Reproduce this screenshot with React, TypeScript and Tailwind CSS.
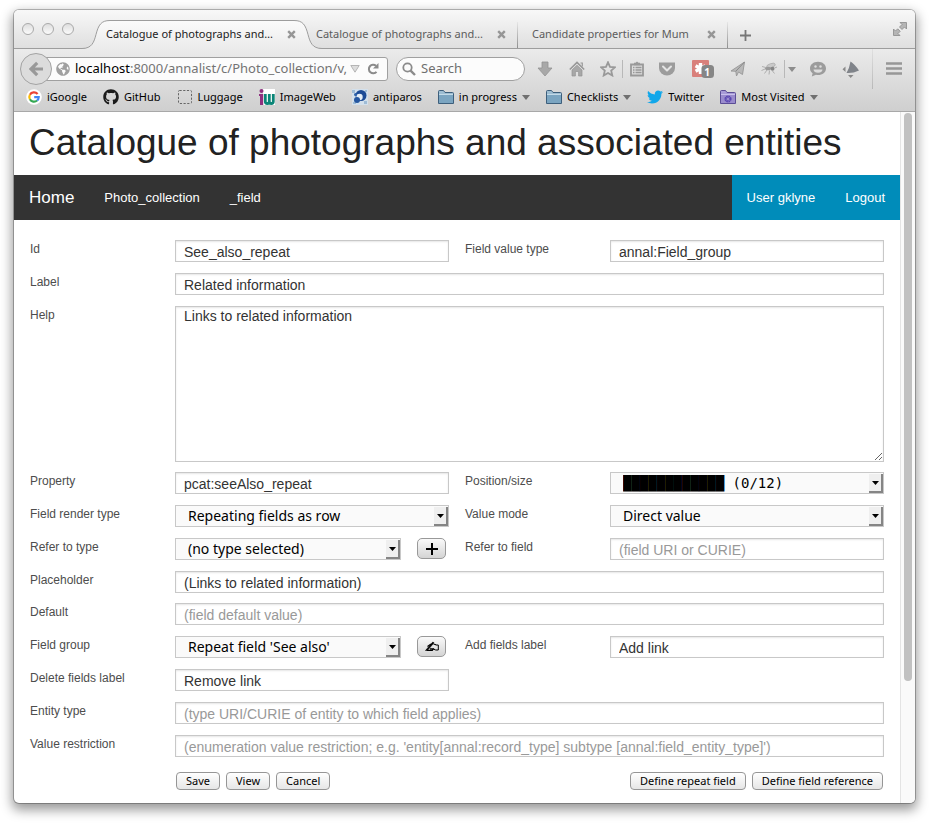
import type { ReactNode } from "react";
import { FaGithub, FaTwitter, FaGlobeAmericas } from "react-icons/fa";

const UI = "font-['Noto_Sans','Open_Sans',sans-serif]";

function Caret({ fill = "#707070" }: { fill?: string }) {
  return (
    <svg width="8" height="5" viewBox="0 0 8 5" aria-hidden="true">
      <path d="M0 0h8L4 5z" fill={fill} />
    </svg>
  );
}

function CloseMark() {
  return (
    <svg width="9" height="9" viewBox="0 0 9 9" aria-hidden="true">
      <path d="M1.2 1.2l6.6 6.6M7.8 1.2L1.2 7.8" stroke="#969696" strokeWidth="2.4" />
    </svg>
  );
}

function FolderIcon({ gear = false }: { gear?: boolean }) {
  const edge = gear ? "#5b4d96" : "#3d5f7c";
  return (
    <svg width="16" height="16" viewBox="0 0 16 16" aria-hidden="true">
      <path d="M.5 14.5v-12q0-1 1-1h4l1.500 2h7.500q1 0 1 1v10z" fill={gear ? "#a79bd6" : "#9dbdd2"} stroke={edge} />
      <path d="M1 6h14v8H1z" fill={gear ? "#9a8ccd" : "#7ba5c1"} />
      <path d="M1 5.500h14" stroke={gear ? "#c9c1ec" : "#c3dae8"} />
      {gear && (
        <circle cx="8" cy="10" r="2.500" fill="none" stroke="#5945b0" strokeWidth="2.200" strokeDasharray="1.500 .46" />
      )}
    </svg>
  );
}

function GoogleIcon() {
  return (
    <svg width="16" height="16" viewBox="0 0 16 16" aria-hidden="true">
      <circle cx="8" cy="8" r="7.800" fill="#fff" />
      <g fill="none" strokeWidth="2.200">
        <path d="M11.600 5A4.700 4.700 0 0 0 3.900 5.700" stroke="#ea4335" />
        <path d="M3.900 5.700a4.700 4.700 0 0 0 0 4.600" stroke="#fbbc05" />
        <path d="M3.900 10.300a4.700 4.700 0 0 0 7.200 1.200" stroke="#34a853" />
        <path d="M11.100 11.500A4.500 4.500 0 0 0 12.700 8.200H8.200" stroke="#4285f4" />
      </g>
    </svg>
  );
}

function ImageWebIcon() {
  return (
    <svg width="16" height="16" viewBox="0 0 16 16" aria-hidden="true">
      <path d="M4 0h12v16H4z" fill="#fff" />
      <circle cx="2.500" cy="2" r="2" fill="#8f2f7f" />
      <path d="M0 5h4.200v11H1V7H0z" fill="#8f2f7f" />
      <path d="M6.300 5v7.500q0 2 2 2t2-2V5v7.500q0 2 2 2t2-2V5" fill="none" stroke="#0b8577" strokeWidth="2.800" />
    </svg>
  );
}

function AntiparosIcon() {
  return (
    <svg width="16" height="16" viewBox="0 0 16 16" aria-hidden="true">
      <path d="M0 0h16v16H0z" fill="#d3e0ec" />
      <path d="M0 1h3v3H0zM12 12h3v3h-3zM1 13h3v2H1zM13 1h2v2h-2z" fill="#9fbcd6" />
      <circle cx="9" cy="6.500" r="5.500" fill="#1c4b96" />
      <circle cx="7.500" cy="8" r="3.200" fill="#e3edf6" />
      <circle cx="5" cy="11" r="3" fill="#2456a0" />
      <circle cx="3.500" cy="5.500" r="1.500" fill="#2f62aa" />
    </svg>
  );
}

function Bookmark({ icon, label, menu = false }: { icon: ReactNode; label: string; menu?: boolean }) {
  return (
    <a href="#" className="flex shrink-0 items-center gap-[5px] whitespace-nowrap">
      <span className="flex w-4 justify-center">{icon}</span>
      {label}
      {menu && <Caret />}
    </a>
  );
}

function ToolButton({ label, className, children }: { label: string; className: string; children: ReactNode }) {
  return (
    <button type="button" aria-label={label} className={`flex h-6 shrink-0 items-center justify-center ${className}`}>
      {children}
    </button>
  );
}

function ToolIcons() {
  return (
    <>
      <ToolButton label="Downloads" className="ml-1 w-8">
        <svg width="16" height="16" viewBox="0 0 16 16">
          <path d="M5 1h6v6h4l-7 8-7-8h4z" fill="#a8a8a8" stroke="#939393" strokeWidth=".8" />
        </svg>
      </ToolButton>
      <ToolButton label="Home page" className="w-8">
        <svg width="16" height="16" viewBox="0 0 16 16">
          <path d="M.8 8.500L8 1.500l7.200 7" fill="none" stroke="#989898" strokeWidth="1.700" />
          <path d="M3 9l5-4.800L13 9v6H9.600v-4.500H6.400V15H3z" fill="#a8a8a8" stroke="#939393" strokeWidth=".7" />
          <path d="M11.500 2h1.800v3.500" fill="none" stroke="#999" strokeWidth="1.200" />
        </svg>
      </ToolButton>
      <ToolButton label="Bookmark this page" className="w-[29px]">
        <svg width="16" height="16" viewBox="0 0 16 16">
          <path d="M8 1.300l2 4.500 4.900.5-3.700 3.300 1.100 4.900L8 12l-4.300 2.500 1.100-4.900L1.100 6.300 6 5.800z" fill="none" stroke="#999" strokeWidth="1.800" />
        </svg>
      </ToolButton>
      <span className="h-[18px] w-px shrink-0 bg-[#b8b8b8]" />
      <ToolButton label="Bookmarks menu" className="w-7">
        <svg width="16" height="16" viewBox="0 0 16 16">
          <path d="M2 3.500h12v11H2z" fill="#ddd" stroke="#999" strokeWidth="1.800" />
          <path d="M5 1.800h1.500L8 .5l1.500 1.300H11v2.500H5z" fill="#999" />
          <path d="M4 6.500h1.500M6.500 6.500h6M4 9h1.500M6.500 9h6M4 11.500h1.500M6.500 11.500h6" stroke="#999" strokeWidth="1.300" />
        </svg>
      </ToolButton>
      <ToolButton label="Save to Pocket" className="w-8">
        <svg width="16" height="16" viewBox="0 0 16 16">
          <path d="M0 1.500h16V7a8 7.500 0 0 1-16 0z" fill="#9c9c9c" />
          <path d="M4 5.500l4 4 4-4" fill="none" stroke="#e4e4e4" strokeWidth="2" strokeLinecap="round" strokeLinejoin="round" />
        </svg>
      </ToolButton>
      <ToolButton label="Blocked content, 1 item" className="relative w-[39px]">
        <svg width="22" height="18" viewBox="0 0 22 18">
          <rect width="17" height="17" rx="1" fill="#d9807b" />
          <path d="M8.500 3v11M3.600 5.700l9.800 5.600M3.600 11.300l9.800-5.600" stroke="#fff" strokeWidth="3.400" />
          <rect x="9.500" y="5" width="12.500" height="13" rx="3.500" fill="#868686" />
        </svg>
        <span className="absolute right-[12px] bottom-[3px] text-[10px] leading-3 font-bold text-white">1</span>
      </ToolButton>
      <ToolButton label="Send" className="w-8">
        <svg width="16" height="16" viewBox="0 0 16 16">
          <path d="M1 10L14.500 1l-2 12.500-4-2.500-2 4-.7-4.700z" fill="#b8b8b8" stroke="#959595" strokeWidth=".9" />
          <path d="M14.500 1L5.800 10.300" stroke="#8a8a8a" />
        </svg>
      </ToolButton>
      <ToolButton label="Firebug" className="w-[30px]">
        <svg width="16" height="14" viewBox="0 0 16 14">
          <ellipse cx="10" cy="3.600" rx="4.500" ry="2" fill="#c9c9c9" stroke="#a5a5a5" strokeWidth=".6" transform="rotate(-18 10 3.600)" />
          <ellipse cx="7" cy="6.500" rx="3" ry="1.800" fill="#9a9a9a" />
          <circle cx="11.500" cy="6.800" r="2" fill="#858585" />
          <path d="M6 8l-2.500 3.500M8.500 8.500L8 12.500M11.500 9l2 2.500M4.800 5.500L1 4.500M4 7L.5 8.500M13.500 6L16 5" stroke="#a8a8a8" strokeWidth=".9" />
        </svg>
      </ToolButton>
      <span className="h-[18px] w-px shrink-0 bg-[#b8b8b8]" />
      <ToolButton label="Firebug options" className="w-[14px]">
        <Caret fill="#8c8c8c" />
      </ToolButton>
      <ToolButton label="Chat" className="ml-[3px] w-8">
        <svg width="16" height="16" viewBox="0 0 16 16">
          <path d="M8 .8c4.500 0 8 2.800 8 6.600S12.500 14 8 14q-1 0-2-.2L1.800 15.500l.8-3.300C1 11 0 9.300 0 7.400 0 3.600 3.500.8 8 .8z" fill="#9c9c9c" />
          <circle cx="5.500" cy="5.500" r="1.200" fill="#ddd" />
          <circle cx="10.500" cy="5.500" r="1.200" fill="#ddd" />
          <path d="M3.500 8.500h9Q12 11.800 8 11.800T3.500 8.500z" fill="#ddd" />
        </svg>
      </ToolButton>
      <ToolButton label="Page tools" className="w-8">
        <svg width="17" height="17" viewBox="0 0 17 17">
          <path d="M8.500.5Q12.500 3 17 9.500 11 12.500 4.500 12 7.500 7 8.500.5z" fill="#80848a" />
          <path d="M3.500 5.500v5.500L.5 8.300zM6 14h5.500l-2.800 3z" fill="#8a8a8a" />
        </svg>
      </ToolButton>
      <span className="ml-[6px] w-px shrink-0 self-stretch bg-gradient-to-b from-[#e0e0e0] to-[#b8b8b8]" />
      <ToolButton label="Open menu" className="w-[42px]">
        <svg width="16" height="14" viewBox="0 0 16 14">
          <path d="M0 1.500h16M0 6.500h16M0 11.500h16" stroke="#979797" strokeWidth="2.600" />
        </svg>
      </ToolButton>
    </>
  );
}

function BrowserChrome() {
  return (
    <header className={`${UI} rounded-t-[5px] text-[11px] text-black`}>
      <div className="flex h-[39px] items-end rounded-t-[5px] border-b border-[#9d9d9d] bg-gradient-to-b from-[#f8f8f8] to-[#dfdfdf]">
        <div className="flex w-[68px] shrink-0 gap-2 self-start pt-[13px] pl-2">
          <button type="button" aria-label="Close window" className="size-3 rounded-full border border-[#a9a9a9] bg-gradient-to-b from-[#dedede] to-[#fbfbfb]" />
          <button type="button" aria-label="Minimise window" className="size-3 rounded-full border border-[#a9a9a9] bg-gradient-to-b from-[#dedede] to-[#fbfbfb]" />
          <button type="button" aria-label="Zoom window" className="size-3 rounded-full border border-[#a9a9a9] bg-gradient-to-b from-[#dedede] to-[#fbfbfb]" />
        </div>
        <div className="relative flex h-[28px] w-[220px] shrink-0 items-center pt-px pl-6">
          <svg className="absolute top-0 left-0 z-0" width="244" height="29" viewBox="0 0 244 29" aria-hidden="true">
            <defs>
              <linearGradient id="tabFill" x1="0" y1="0" x2="0" y2="1">
                <stop offset="0" stopColor="#fbfbfb" />
                <stop offset="1" stopColor="#ebebeb" />
              </linearGradient>
            </defs>
            <path
              d="M0 29v-.5c10 0 12-6.500 14-14C16.500 5 19 .5 28 .5h184c9 0 11.500 4.500 14 14 2 7.500 4 14 14 14v.5z"
              fill="url(#tabFill)"
            />
            <path d="M0 28.500c10 0 12-6.500 14-14C16.500 5 19 .5 28 .5h184c9 0 11.500 4.500 14 14 2 7.500 4 14 14 14" fill="none" stroke="#9d9d9d" />
          </svg>
          <span className="relative w-[181px] text-[#222]">Catalogue of photographs and…</span>
          <button type="button" aria-label="Close tab" className="relative">
            <CloseMark />
          </button>
        </div>
        <div className="relative flex h-[28px] w-[216px] shrink-0 items-center pt-px pl-[14px] text-[#5c5c5c]">
          <span className="w-[181px]">Catalogue of photographs and…</span>
          <button type="button" aria-label="Close tab">
            <CloseMark />
          </button>
          <span className="absolute right-0 bottom-0 h-[26px] w-px bg-gradient-to-b from-[#e6e6e6] to-[#8f8f8f]" />
        </div>
        <div className="relative flex h-[28px] w-[210px] shrink-0 items-center pt-px pl-[14px] text-[#5c5c5c]">
          <span className="w-[175px]">Candidate properties for Mum</span>
          <button type="button" aria-label="Close tab">
            <CloseMark />
          </button>
          <span className="absolute right-0 bottom-0 h-[26px] w-px bg-gradient-to-b from-[#e6e6e6] to-[#8f8f8f]" />
        </div>
        <button type="button" aria-label="New tab" className="flex h-[28px] w-[34px] items-center justify-center pt-[3px]">
          <svg width="11" height="11" viewBox="0 0 11 11">
            <path d="M5.500 0v11M0 5.500h11" stroke="#777" strokeWidth="1.800" />
          </svg>
        </button>
        <button type="button" aria-label="Full screen" className="mt-3 mr-2 ml-auto self-start">
          <svg width="14" height="14" viewBox="0 0 14 14">
            <path d="M7 .5h6.500V7l-2-2-2.500 2.500L6.500 5 9 2.500z" fill="#b5b5b5" stroke="#8a8a8a" strokeWidth=".8" />
            <path d="M.5 7v6.500H7l-2-2 2.200-2.200L4.700 6.800 2.500 9z" fill="#b5b5b5" stroke="#8a8a8a" strokeWidth=".8" />
          </svg>
        </button>
      </div>
      <div className="border-b border-[#a8a8a8] bg-gradient-to-b from-[#ebebeb] to-[#cfcfcf]">
        <div className="flex h-10 items-center">
          <button
            type="button"
            aria-label="Back"
            className="relative z-10 ml-[6px] flex size-8 shrink-0 items-center justify-center rounded-full border border-[#a3a3a3] bg-[#dcdcdc]"
          >
            <svg width="15" height="16" viewBox="0 0 15 16">
              <path d="M14 8H2.500M8.200 1.800L2 8l6.200 6.200" fill="none" stroke="#999" strokeWidth="3.200" />
            </svg>
          </button>
          <div className="-ml-3 flex h-6 min-w-0 flex-1 items-center rounded-r-[3px] border border-[#a0a0a0] bg-[#fcfcfc] pl-[15px]">
            <FaGlobeAmericas className="shrink-0 text-[#a0a0a0]" size={14} />
            <div className="ml-[5px] min-w-0 flex-1 overflow-hidden text-[13px] whitespace-nowrap text-[#737373]">
              <span className="text-black">localhost</span>:8000/annalist/c/Photo_collection/v,
            </div>
            <button type="button" aria-label="Show history">
              <svg width="10" height="8" viewBox="0 0 10 8">
                <path d="M.8.500h8.400L5 7.200z" fill="#ddd" stroke="#b5b5b5" />
              </svg>
            </button>
            <button type="button" aria-label="Reload" className="mr-2 ml-[7px]">
              <svg width="12" height="12" viewBox="0 0 12 12">
                <path d="M9.500 8.800A4.300 4.300 0 1 1 9 2.800" fill="none" stroke="#8b8b8b" strokeWidth="2" />
                <path d="M11.500 0v5.500H6z" fill="#8b8b8b" />
              </svg>
            </button>
          </div>
          <label className="ml-2 flex h-6 w-[129px] shrink-0 items-center rounded-full border border-[#a0a0a0] bg-[#fcfcfc] pl-[5px]">
            <svg width="14" height="14" viewBox="0 0 14 14" className="shrink-0" aria-hidden="true">
              <circle cx="5.500" cy="5.500" r="4.200" fill="none" stroke="#8b8b8b" strokeWidth="1.800" />
              <path d="M8.600 8.600l4.400 4.400" stroke="#8b8b8b" strokeWidth="2.400" />
            </svg>
            <input
              type="text"
              aria-label="Search"
              placeholder="Search"
              className="ml-[5px] w-full min-w-0 bg-transparent text-[13px] outline-none placeholder:text-[#6f6f6f]"
            />
          </label>
          <ToolIcons />
        </div>
        <nav aria-label="Bookmarks" className="flex h-[22px] items-start gap-4 overflow-hidden pl-3">
          <Bookmark icon={<GoogleIcon />} label="iGoogle" />
          <Bookmark icon={<FaGithub size={16} color="#1b1b1b" />} label="GitHub" />
          <Bookmark
            icon={
              <svg width="16" height="16" viewBox="0 0 16 16" aria-hidden="true">
                <rect x="1.500" y="1.500" width="13" height="13" rx="1" fill="none" stroke="#666" strokeDasharray="2.200 1.500" />
              </svg>
            }
            label="Luggage"
          />
          <Bookmark icon={<ImageWebIcon />} label="ImageWeb" />
          <Bookmark icon={<AntiparosIcon />} label="antiparos" />
          <Bookmark icon={<FolderIcon />} label="in progress" menu />
          <Bookmark icon={<FolderIcon />} label="Checklists" menu />
          <Bookmark icon={<FaTwitter size={16} color="#11a7ea" />} label="Twitter" />
          <Bookmark icon={<FolderIcon gear />} label="Most Visited" menu />
        </nav>
      </div>
    </header>
  );
}

const fieldBox =
  "block w-full min-w-0 border border-[#c8c8c8] bg-white px-2 text-sm text-[#333] shadow-[inset_0_1px_2px_rgba(0,0,0,0.1)] outline-none placeholder:text-[#999]";

function Row({ id, label, wide = false, children }: { id: string; label: string; wide?: boolean; children: ReactNode }) {
  return (
    <div className={wide ? "col-span-2 flex" : "flex"}>
      <label htmlFor={id} className="w-[145px] shrink-0 text-xs leading-[18px] text-[#4d4d4d]">
        {label}
      </label>
      <div className="flex min-w-0 flex-1">{children}</div>
    </div>
  );
}

type TextRowProps = { id: string; label: string; value?: string; placeholder?: string; wide?: boolean };

function TextRow({ id, label, value, placeholder, wide }: TextRowProps) {
  return (
    <Row id={id} label={label} wide={wide}>
      <input id={id} type="text" defaultValue={value} placeholder={placeholder} className={`${fieldBox} h-[22px] pt-px`} />
    </Row>
  );
}

function SelectBox({ id, value, mono = false }: { id: string; value: string; mono?: boolean }) {
  return (
    <div className="relative min-w-0 flex-1">
      <select
        id={id}
        defaultValue={value}
        className={`block h-[22px] w-full appearance-none border border-[#c8c8c8] bg-[#fafafa] pr-4 pl-3 text-sm leading-5 text-black outline-none ${
          mono ? "font-['DejaVu_Sans_Mono',monospace]" : "font-['Noto_Sans','Open_Sans',sans-serif]"
        }`}
      >
        <option>{value}</option>
      </select>
      <span className="pointer-events-none absolute top-[2px] right-px flex h-[19px] w-[14px] items-center justify-center border-r-2 border-b-2 border-[#858585] bg-[#efefef]">
        <svg width="7" height="4" viewBox="0 0 7 4" aria-hidden="true">
          <path d="M0 0h7L3.500 4z" fill="#000" />
        </svg>
      </span>
    </div>
  );
}

function IconButton({ label, children }: { label: string; children: ReactNode }) {
  return (
    <button
      type="button"
      aria-label={label}
      className="mr-[3px] ml-4 flex h-[21px] w-[29px] shrink-0 items-center justify-center rounded-[5px] border border-[#999] bg-gradient-to-b from-[#fafafa] to-[#d4d4d4]"
    >
      {children}
    </button>
  );
}

function PushButton({ children }: { children: ReactNode }) {
  return (
    <button
      type="button"
      className={`${UI} h-[18px] rounded-[4px] border border-[#969696] bg-gradient-to-b from-white to-[#e6e6e6] px-[9px] text-[11px] leading-4 text-black`}
    >
      {children}
    </button>
  );
}

function FieldGrid({ children }: { children: ReactNode }) {
  return <div className="grid grid-cols-2 gap-x-4 gap-y-[11px]">{children}</div>;
}

function FieldForm() {
  return (
    <form className="px-4 pt-5 pb-[13px]">
      <div className="flex flex-col gap-[10px]">
        <FieldGrid>
          <TextRow id="field-id" label="Id" value="See_also_repeat" />
          <TextRow id="value-type" label="Field value type" value="annal:Field_group" />
          <TextRow id="label" label="Label" value="Related information" wide />
          <Row id="help" label="Help" wide>
            <textarea id="help" defaultValue="Links to related information" className={`${fieldBox} h-[156px] leading-[18px]`} />
          </Row>
        </FieldGrid>
        <FieldGrid>
          <TextRow id="property" label="Property" value="pcat:seeAlso_repeat" />
          <Row id="position" label="Position/size">
            <SelectBox id="position" value="████████████ (0/12)" mono />
          </Row>
          <Row id="render-type" label="Field render type">
            <SelectBox id="render-type" value="Repeating fields as row" />
          </Row>
          <Row id="value-mode" label="Value mode">
            <SelectBox id="value-mode" value="Direct value" />
          </Row>
          <Row id="refer-type" label="Refer to type">
            <SelectBox id="refer-type" value="(no type selected)" />
            <IconButton label="New type">
              <svg width="12" height="12" viewBox="0 0 12 12">
                <path d="M6 0v12M0 6h12" stroke="#000" strokeWidth="2" />
              </svg>
            </IconButton>
          </Row>
          <TextRow id="refer-field" label="Refer to field" placeholder="(field URI or CURIE)" />
          <TextRow id="placeholder" label="Placeholder" value="(Links to related information)" wide />
        </FieldGrid>
        <FieldGrid>
          <TextRow id="default" label="Default" placeholder="(field default value)" wide />
          <Row id="group" label="Field group">
            <SelectBox id="group" value="Repeat field 'See also'" />
            <IconButton label="Edit field group">
              <svg width="14" height="11" viewBox="0 0 14 11">
                <path d="M.5 9.500L7.800 1l1.200.8L3 8.800z" fill="#000" stroke="#000" strokeWidth=".6" />
                <path d="M2.500 5.500L6 3M1.500 9.300h5.800l1-1.500H5M8.500 3l2.500.8" fill="none" stroke="#000" strokeWidth="1.200" />
                <path d="M10.800 4h2.500v5h-2.500L8 8" fill="none" stroke="#000" strokeWidth="1" />
              </svg>
            </IconButton>
          </Row>
          <TextRow id="add-label" label="Add fields label" value="Add link" />
          <div className="col-span-2 grid grid-cols-2 gap-x-4">
            <TextRow id="delete-label" label="Delete fields label" value="Remove link" />
          </div>
          <TextRow id="entity-type" label="Entity type" placeholder="(type URI/CURIE of entity to which field applies)" wide />
          <TextRow
            id="restriction"
            label="Value restriction"
            placeholder="(enumeration value restriction; e.g. 'entity[annal:record_type] subtype [annal:field_entity_type]')"
            wide
          />
        </FieldGrid>
      </div>
      <div className="mt-[15px] flex justify-between pr-px pl-[146px]">
        <div className="flex gap-[6px]">
          <PushButton>Save</PushButton>
          <PushButton>View</PushButton>
          <PushButton>Cancel</PushButton>
        </div>
        <div className="flex gap-[6px]">
          <PushButton>Define repeat field</PushButton>
          <PushButton>Define field reference</PushButton>
        </div>
      </div>
    </form>
  );
}

export default function App() {
  return (
    <div className="bg-white px-[14px] pt-[10px] pb-5 font-['Liberation_Sans',Arial,sans-serif]">
      <div className="rounded-[5px] bg-white shadow-[0_0_0_1px_rgba(0,0,0,0.25),0_5px_12px_2px_rgba(0,0,0,0.4)]">
        <BrowserChrome />
        <div className="flex overflow-hidden rounded-b-[5px]">
          <main className="min-w-0 flex-1">
            <h1 className="overflow-hidden pb-px pl-[15px] text-[37px] leading-[62px] whitespace-nowrap text-[#222]">
              Catalogue of photographs and associated entities
            </h1>
            <nav aria-label="Site" className="flex h-[45px] items-stretch bg-[#333] text-[13px] text-white">
              <a href="#" className="flex items-center px-[15px] pt-px text-[17px]">
                Home
              </a>
              <a href="#" className="flex items-center px-[15px] pt-px">
                Photo_collection
              </a>
              <a href="#" className="flex items-center px-[15px] pt-px">
                _field
              </a>
              <div className="ml-auto flex bg-[#008cba]">
                <a href="#" className="flex items-center px-[15px] pt-px">
                  User gklyne
                </a>
                <a href="#" className="flex items-center px-[15px] pt-px">
                  Logout
                </a>
              </div>
            </nav>
            <FieldForm />
          </main>
          <div aria-hidden="true" className="flex w-[15px] shrink-0 flex-col items-center border-l border-[#e4e4e4] bg-[#fafafa] pt-px">
            <div className="h-[568px] w-2 rounded-full bg-[#c1c1c1]" />
          </div>
        </div>
      </div>
    </div>
  );
}
